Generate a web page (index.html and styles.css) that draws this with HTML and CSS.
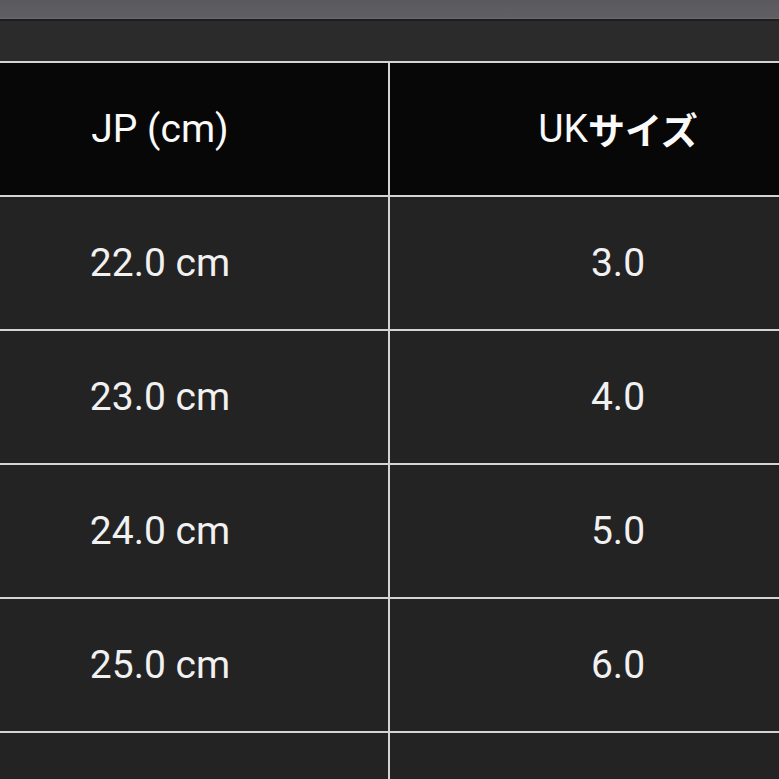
FILE: index.html
```html
<!DOCTYPE html>
<html lang="ja">
<head>
<meta charset="utf-8">
<title>サイズ表</title>
<link rel="stylesheet" href="styles.css">
</head>
<body>
<div class="page">
  <div class="topbar"></div>
  <div class="band"></div>
  <div class="table">
    <div class="cell head">JP (cm)</div>
    <div class="cell head">UK<span class="jp">サイズ</span></div>
    <div class="cell">22.0 cm</div>
    <div class="cell">3.0</div>
    <div class="cell">23.0 cm</div>
    <div class="cell">4.0</div>
    <div class="cell">24.0 cm</div>
    <div class="cell">5.0</div>
    <div class="cell">25.0 cm</div>
    <div class="cell">6.0</div>
    <div class="cell"></div>
    <div class="cell"></div>
  </div>
</div>
</body>
</html>
```
FILE: styles.css
```css
html, body {
  margin: 0;
  padding: 0;
  background: #2c2c2c;
}
.page {
  width: 779px;
  height: 779px;
  overflow: hidden;
}
.topbar {
  height: 18px;
  background: linear-gradient(#5a5a5e, #606064);
  border-bottom: 1px solid #6a6a6e;
}
.band {
  height: 40px;
  background: #2b2b2b;
  border-top: 2px solid #1d1d1d;
}
.table {
  margin-left: -68px;
  width: 914px;
  display: grid;
  grid-template-columns: 456px 456px;
  grid-auto-rows: 132px;
  gap: 2px;
  padding-top: 2px;
  background: #d4d4d4;
}
.cell {
  background: #232323;
  color: #f1f1f1;
  font-family: Roboto, "Noto Sans CJK JP", sans-serif;
  font-size: 39px;
  display: flex;
  align-items: center;
  justify-content: center;
}
.head {
  background: #070707;
  color: #fafafa;
}
.jp {
  font-family: "Noto Sans CJK JP", sans-serif;
  font-size: 37px;
  font-weight: 700;
}
```
